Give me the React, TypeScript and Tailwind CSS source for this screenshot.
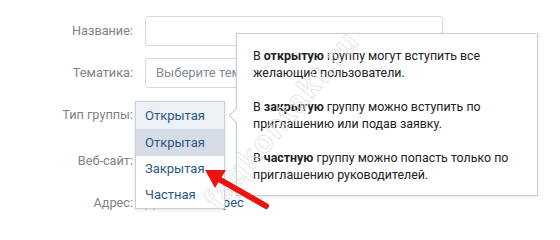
import React from "react";

const labelCls = "w-[133px] shrink-0 text-right text-[12.7px] text-[#828282]";

const App = () => {
  return (
    <div className="relative w-[560px] h-[240px] overflow-hidden bg-white font-['Roboto','Liberation_Sans',sans-serif] text-[13px]">
      <div className="flex flex-col pt-[16px]">
        <div className="flex items-center gap-[12px] h-[30px]">
          <span className={labelCls}>Название:</span>
          <div className="w-[298px] h-[30px] border border-[#d3d9de] rounded-[3px]" />
        </div>
        <div className="flex items-center gap-[12px] h-[30px] mt-[12px]">
          <span className={labelCls}>Тематика:</span>
          <div className="w-[298px] h-[30px] border border-[#d3d9de] rounded-[3px] pl-[10px] flex items-center text-[#818c99]">
            Выберите тематику
          </div>
        </div>
        <div className="relative flex items-center gap-[12px] h-[27px] mt-[13px]">
          <span className={labelCls}>Тип группы:</span>
          {/* открытый список */}
          <div className="absolute left-[135px] top-0 w-[90px] z-10 bg-white border border-[#c5d0db] shadow-[0_1px_3px_rgba(0,0,0,0.12)] text-[#2a5885]">
            <div className="h-[27px] flex items-center pl-[9px] bg-[#edf0f5]">Открытая</div>
            <div className="h-[27px] flex items-center pl-[9px] bg-[#d6dde6]">Открытая</div>
            <div className="h-[26px] flex items-center pl-[9px]">Закрытая</div>
            <div className="h-[26px] flex items-center pl-[9px]">Частная</div>
          </div>
        </div>
        <div className="flex items-center gap-[12px] h-[28px] mt-[19px]">
          <span className={labelCls}>Веб-сайт:</span>
        </div>
        <div className="flex items-center gap-[12px] h-[28px] mt-[14px]">
          <span className={labelCls}>Адрес:</span>
          <span className="text-[#2a5885]">Добавить адрес</span>
        </div>
      </div>

      {/* подсказка */}
      <div className="absolute left-[236px] top-[33px] w-[302px] h-[163px] z-20 bg-white border border-[#c5d0db] shadow-[0_1px_3px_rgba(0,0,0,0.1)] pt-[13px] pl-[16px] pr-[10px] text-[12.4px] leading-[17px] text-[#222]">
        <div className="absolute -left-[6px] top-[76px] w-[11px] h-[11px] rotate-45 bg-white border-l border-b border-[#c5d0db]" />
        <p>
          В <b>открытую</b> группу могут вступить все
          <br />
          желающие пользователи.
        </p>
        <p className="mt-[17px]">
          В <b>закрытую</b> группу можно вступить по
          <br />
          приглашению или подав заявку.
        </p>
        <p className="mt-[17px]">
          В <b>частную</b> группу можно попасть только по
          <br />
          приглашению руководителей.
        </p>
      </div>

      {/* водяной знак */}
      <div className="absolute left-[282px] top-[120px] z-30 pointer-events-none -translate-x-1/2 -translate-y-1/2 rotate-[-50deg] whitespace-nowrap text-[31px] font-bold tracking-[2px] text-transparent [-webkit-text-stroke:0.8px_#e3e3e3] font-['Liberation_Sans',sans-serif]">
        faqkontakt.ru
      </div>

      {/* стрелка */}
      <svg className="absolute left-0 top-0 z-40" width="560" height="240" viewBox="0 0 560 240">
        <line x1="266" y1="206" x2="217" y2="178" stroke="#ee1111" strokeWidth="6" strokeLinecap="round" />
        <polygon points="205,170 226,170 215,188" fill="#ee1111" />
      </svg>
    </div>
  );
};

export default App;
